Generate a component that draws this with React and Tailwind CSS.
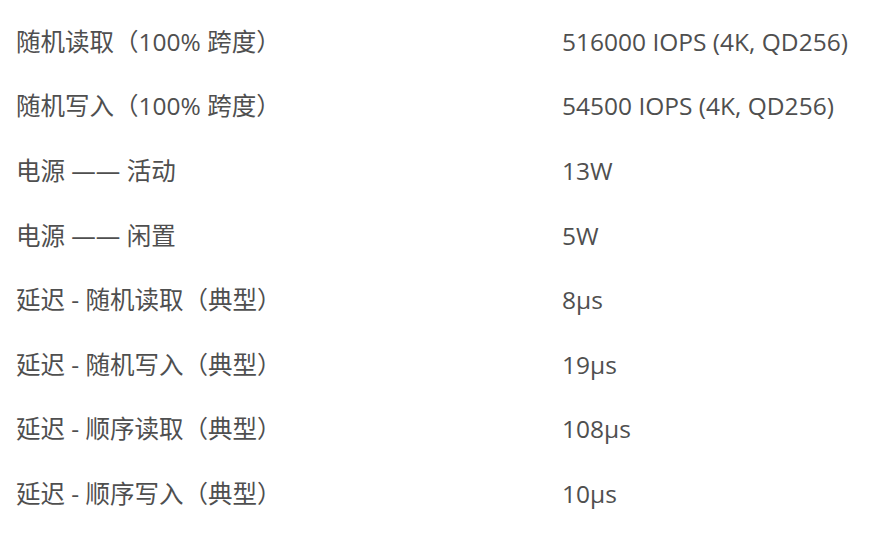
import React from "react";

const rows = [
  ["随机读取（100% 跨度）", "516000 IOPS (4K, QD256)"],
  ["随机写入（100% 跨度）", "54500 IOPS (4K, QD256)"],
  ["电源 —— 活动", "13W"],
  ["电源 —— 闲置", "5W"],
  ["延迟 - 随机读取（典型）", "8µs"],
  ["延迟 - 随机写入（典型）", "19µs"],
  ["延迟 - 顺序读取（典型）", "108µs"],
  ["延迟 - 顺序写入（典型）", "10µs"],
];

export default function App() {
  return (
    <div
      className="w-[887px] h-[536px] bg-white overflow-hidden pt-[10px] text-[#4f4f4f] text-[24.5px]"
      style={{ fontFamily: '"Open Sans", "Noto Sans CJK SC", sans-serif' }}
    >
      {rows.map(([a, b], i) => (
        <div key={i} className="flex items-center h-[64.57px]">
          <div className="w-[562px] pl-[16px] shrink-0">{a}</div>
          <div>{b}</div>
        </div>
      ))}
    </div>
  );
}
